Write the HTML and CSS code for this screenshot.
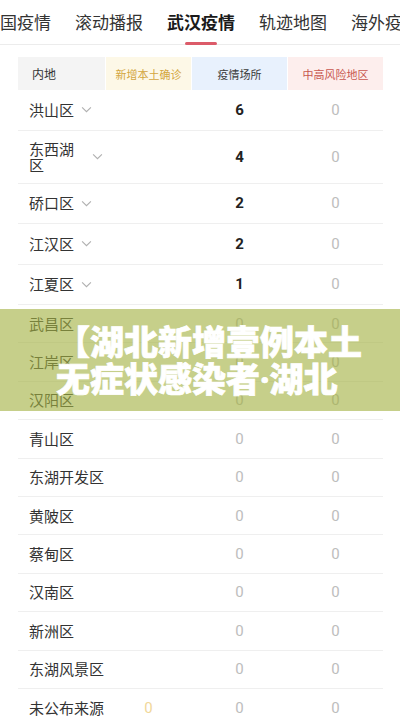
FILE: index.html
```html
<!DOCTYPE html>
<html lang="zh-CN">
<head>
<meta charset="utf-8">
<title>武汉疫情</title>
<link rel="stylesheet" href="styles.css">
</head>
<body>
<nav class="tabbar">
  <div class="tabs">
    <div class="tab">中国疫情</div>
    <div class="tab">滚动播报</div>
    <div class="tab active">武汉疫情<span class="bar"></span></div>
    <div class="tab">轨迹地图</div>
    <div class="tab">海外疫情</div>
  </div>
</nav>

<section class="table">
  <div class="head">
    <div class="h h-area">内地</div>
    <div class="h h-new">新增本土确诊</div>
    <div class="h h-place">疫情场所</div>
    <div class="h h-risk">中高风险地区</div>
  </div>

  <div class="row exp"><div class="name"><span class="txt">洪山区</span><svg class="chev" viewBox="0 0 10 6"><polyline points="1,1 5,5 9,1"/></svg></div><div class="num"></div><div class="num strong">6</div><div class="num zero">0</div></div>
  <div class="row exp"><div class="name"><span class="txt">东西湖区</span><svg class="chev" viewBox="0 0 10 6"><polyline points="1,1 5,5 9,1"/></svg></div><div class="num"></div><div class="num strong">4</div><div class="num zero">0</div></div>
  <div class="row exp"><div class="name"><span class="txt">硚口区</span><svg class="chev" viewBox="0 0 10 6"><polyline points="1,1 5,5 9,1"/></svg></div><div class="num"></div><div class="num strong">2</div><div class="num zero">0</div></div>
  <div class="row exp"><div class="name"><span class="txt">江汉区</span><svg class="chev" viewBox="0 0 10 6"><polyline points="1,1 5,5 9,1"/></svg></div><div class="num"></div><div class="num strong">2</div><div class="num zero">0</div></div>
  <div class="row exp"><div class="name"><span class="txt">江夏区</span><svg class="chev" viewBox="0 0 10 6"><polyline points="1,1 5,5 9,1"/></svg></div><div class="num"></div><div class="num strong">1</div><div class="num zero">0</div></div>

  <div class="row"><div class="name">武昌区</div><div class="num"></div><div class="num zero">0</div><div class="num zero">0</div></div>
  <div class="row"><div class="name">江岸区</div><div class="num"></div><div class="num zero">0</div><div class="num zero">0</div></div>
  <div class="row"><div class="name">汉阳区</div><div class="num"></div><div class="num zero">0</div><div class="num zero">0</div></div>
  <div class="row"><div class="name">青山区</div><div class="num"></div><div class="num zero">0</div><div class="num zero">0</div></div>
  <div class="row"><div class="name">东湖开发区</div><div class="num"></div><div class="num zero">0</div><div class="num zero">0</div></div>
  <div class="row"><div class="name">黄陂区</div><div class="num"></div><div class="num zero">0</div><div class="num zero">0</div></div>
  <div class="row"><div class="name">蔡甸区</div><div class="num"></div><div class="num zero">0</div><div class="num zero">0</div></div>
  <div class="row"><div class="name">汉南区</div><div class="num"></div><div class="num zero">0</div><div class="num zero">0</div></div>
  <div class="row"><div class="name">新洲区</div><div class="num"></div><div class="num zero">0</div><div class="num zero">0</div></div>
  <div class="row"><div class="name">东湖风景区</div><div class="num"></div><div class="num zero">0</div><div class="num zero">0</div></div>
  <div class="row"><div class="name">未公布来源</div><div class="num yellow">0</div><div class="num zero">0</div><div class="num zero">0</div></div>
</section>

<div class="banner">
  <span class="bline">【湖北新增壹例本土</span>
  <span class="bline">无症状感染者<span class="dot">·</span>湖北</span>
</div>
</body>
</html>
```

FILE: styles.css
```css
html, body {
  margin: 0;
  padding: 0;
  background: #fff;
}
body {
  position: relative;
  font-family: "Noto Sans CJK SC", "Noto Sans", sans-serif;
  color: #333;
  overflow: hidden;
  height: 723px;
}

/* ---------- tabs ---------- */
.tabbar {
  height: 45px;
  overflow: hidden;
  background: linear-gradient(#ececec, #ececec) left bottom / 100% 1px no-repeat;
}
.tabs {
  display: flex;
  gap: 24px;
  margin-left: -17px;
  white-space: nowrap;
  height: 45px;
}
.tab {
  flex: none;
  display: flex;
  flex-direction: column;
  align-items: center;
  font-size: 17px;
  line-height: 24px;
  padding-top: 10px;
  box-sizing: border-box;
  height: 45px;
  color: #333;
}
.tab.active {
  font-weight: 700;
  color: #1a1a1a;
}
.tab .bar {
  display: block;
  margin-top: auto;
  width: 32px;
  height: 3px;
  border-radius: 2px;
  background: #dc5b69;
}

/* ---------- table ---------- */
.table {
  margin: 12px 17px 0 18px;
}
.head,
.row {
  display: grid;
  grid-template-columns: 87px 85px 95px 95px;
  column-gap: 1px;
}
.head {
  height: 33px;
}
.h {
  display: flex;
  align-items: center;
  justify-content: center;
  font-size: 11px;
}
.h-area {
  justify-content: flex-start;
  padding-left: 14px;
  font-size: 12px;
  background: #f4f4f4;
  color: #333;
}
.h-new {
  background: #fdf8e7;
  color: #d3a640;
}
.h-place {
  background: #e8f1fd;
  color: #3a3a3a;
}
.h-risk {
  background: #fdeeed;
  color: #c8564f;
}

.row {
  box-sizing: border-box;
  height: 38.4px;
  border-bottom: 1px solid #efefef;
  align-items: center;
}
.row.exp {
  height: auto;
  min-height: 40.5px;
  padding: 10px 0;
}
.name {
  display: flex;
  align-items: center;
  gap: 7px;
  padding-left: 11px;
  font-size: 15px;
  line-height: 16px;
  color: #333;
  white-space: nowrap;
}
.name .txt {
  max-width: 56px;
  white-space: normal;
}
.chev {
  width: 11px;
  height: 7px;
  flex: none;
}
.chev polyline {
  fill: none;
  stroke: #b0b0b0;
  stroke-width: 1;
}
.num {
  text-align: center;
  font-family: Roboto, "Noto Sans", sans-serif;
  font-size: 15px;
  line-height: 16px;
}
.num.strong {
  font-weight: 700;
  color: #222;
}
.num.zero {
  color: #bdbdbd;
}
.num.yellow {
  color: #f1d79a;
}

/* ---------- overlay banner ---------- */
.banner {
  position: absolute;
  left: 0;
  top: 309px;
  width: 400px;
  height: 102px;
  box-sizing: border-box;
  padding-left: 56px;
  display: flex;
  flex-direction: column;
  align-items: flex-start;
  justify-content: center;
  background: rgba(163, 178, 66, 0.62);
  color: #fff;
  font-family: "Noto Sans CJK SC", sans-serif;
  font-weight: 900;
  font-size: 34px;
  line-height: 37px;
  white-space: nowrap;
  text-spacing-trim: space-all;
  -webkit-text-stroke: 0.7px #fff;
}
.bline {
  display: block;
}
.dot {
  font-family: "Noto Sans", "DejaVu Sans", sans-serif;
  font-weight: 700;
}
```
